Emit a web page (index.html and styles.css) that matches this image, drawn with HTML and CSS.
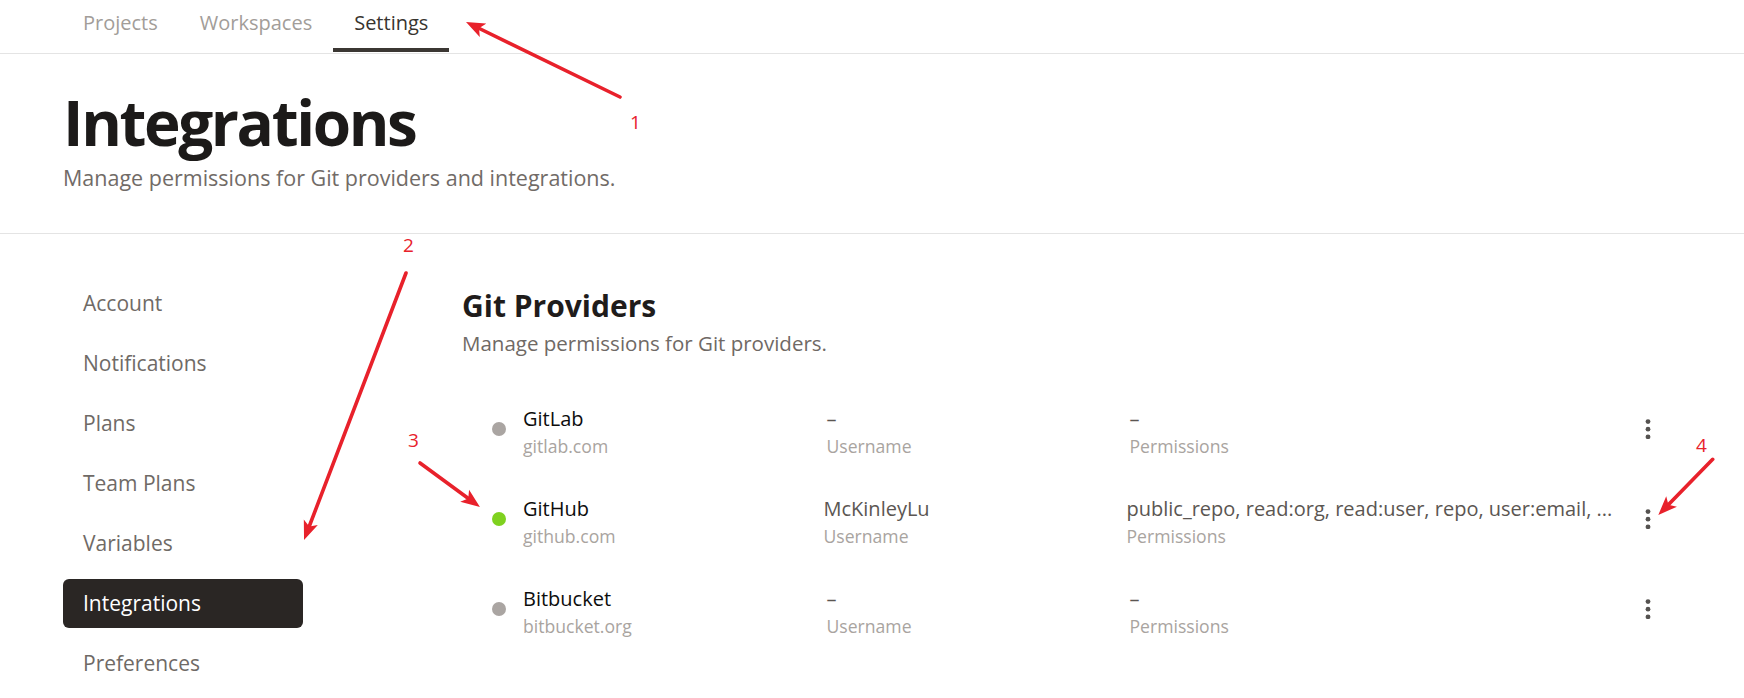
FILE: index.html
```html
<!DOCTYPE html>
<html lang="en">
<head>
<meta charset="utf-8">
<title>Integrations</title>
<link rel="stylesheet" href="styles.css">
</head>
<body>
<nav class="topnav">
  <a class="tab">Projects</a>
  <a class="tab">Workspaces</a>
  <a class="tab active">Settings</a>
</nav>
<header class="page-head">
  <h1 class="page-title">Integrations</h1>
  <p class="page-sub">Manage permissions for Git providers and integrations.</p>
</header>
<div class="layout">
  <aside class="sidebar">
    <a class="side-item">Account</a>
    <a class="side-item">Notifications</a>
    <a class="side-item">Plans</a>
    <a class="side-item">Team Plans</a>
    <a class="side-item">Variables</a>
    <a class="side-item active">Integrations</a>
    <a class="side-item">Preferences</a>
  </aside>
  <main class="main">
    <h2 class="section-title">Git Providers</h2>
    <p class="section-sub">Manage permissions for Git providers.</p>
    <div class="providers">
      <div class="row">
        <span class="dot"></span>
        <div class="cell"><div class="primary name">GitLab</div><div class="secondary">gitlab.com</div></div>
        <div class="cell"><div class="primary value">–</div><div class="secondary">Username</div></div>
        <div class="cell"><div class="primary value">–</div><div class="secondary">Permissions</div></div>
        <svg class="kebab" width="6" height="20" viewBox="0 0 6 20"><circle cx="3" cy="2.6" r="2.4"/><circle cx="3" cy="10.2" r="2.4"/><circle cx="3" cy="17.8" r="2.4"/></svg>
      </div>
      <div class="row">
        <span class="dot on"></span>
        <div class="cell"><div class="primary name">GitHub</div><div class="secondary">github.com</div></div>
        <div class="cell shift"><div class="primary value">McKinleyLu</div><div class="secondary">Username</div></div>
        <div class="cell shift"><div class="primary value">public_repo, read:org, read:user, repo, user:email, ...</div><div class="secondary">Permissions</div></div>
        <svg class="kebab" width="6" height="20" viewBox="0 0 6 20"><circle cx="3" cy="2.6" r="2.4"/><circle cx="3" cy="10.2" r="2.4"/><circle cx="3" cy="17.8" r="2.4"/></svg>
      </div>
      <div class="row">
        <span class="dot"></span>
        <div class="cell"><div class="primary name">Bitbucket</div><div class="secondary">bitbucket.org</div></div>
        <div class="cell"><div class="primary value">–</div><div class="secondary">Username</div></div>
        <div class="cell"><div class="primary value">–</div><div class="secondary">Permissions</div></div>
        <svg class="kebab" width="6" height="20" viewBox="0 0 6 20"><circle cx="3" cy="2.6" r="2.4"/><circle cx="3" cy="10.2" r="2.4"/><circle cx="3" cy="17.8" r="2.4"/></svg>
      </div>
    </div>
  </main>
</div>
<svg class="annotations" width="1744" height="698" viewBox="0 0 1744 698">
  <defs>
    <marker id="head" markerUnits="userSpaceOnUse" markerWidth="20" markerHeight="16" viewBox="0 0 20 16" refX="11" refY="8" orient="auto">
      <path d="M19,8 L0,0.5 L4.5,8 L0,15.5 Z" fill="#e8212b"/>
    </marker>
  </defs>
  <g stroke="#e8212b" stroke-width="3.6" stroke-linecap="round" fill="none" marker-end="url(#head)">
    <line x1="620" y1="97" x2="473.2" y2="25.5"/>
    <line x1="406" y1="273" x2="306.9" y2="532.5"/>
    <line x1="420" y1="463" x2="473.5" y2="502.3"/>
    <line x1="1712.7" y1="459.3" x2="1663.9" y2="509.3"/>
  </g>
  <g class="anno-num" fill="#e8212b">
    <text x="630" y="129">1</text>
    <text x="403" y="252">2</text>
    <text x="408" y="447">3</text>
    <text x="1696" y="452">4</text>
  </g>
</svg>
</body>
</html>
```
FILE: styles.css
```css
* { box-sizing: border-box; }
html, body { margin: 0; padding: 0; }
body {
  position: relative;
  width: 1744px;
  height: 698px;
  overflow: hidden;
  background: #fff;
  font-family: "Open Sans", "Noto Sans", sans-serif;
  color: #1c1a19;
}

/* top navigation */
.topnav {
  display: flex;
  height: 54px;
  padding-left: 62px;
  border-bottom: 1px solid #e4e4e4;
}
.tab {
  display: block;
  height: 52px;
  padding: 9px 21px 0;
  font-size: 20px;
  line-height: 28px;
  color: #a29d99;
  border-bottom: 4px solid transparent;
}
.tab.active {
  color: #38342f;
  border-bottom-color: #3b3733;
}

/* page header */
.page-head {
  padding: 37px 0 40.4px 63px;
  border-bottom: 1px solid #e4e4e4;
}
.page-title {
  margin: 0;
  font-size: 62px;
  line-height: 62px;
  font-weight: 700;
  letter-spacing: -2.4px;
  color: #1c1a19;
}
.page-sub {
  margin: 9.6px 0 0;
  font-size: 21.5px;
  line-height: 30px;
  color: #716b67;
}

/* body layout */
.layout {
  display: grid;
  grid-template-columns: 240px 1fr;
  column-gap: 159px;
  padding: 0 86px 0 63px;
}
.sidebar {
  display: flex;
  flex-direction: column;
  gap: 11px;
  padding-top: 45.5px;
}
.side-item {
  display: block;
  height: 49px;
  padding-left: 20px;
  font-size: 21px;
  line-height: 49px;
  color: #6f6a66;
  border-radius: 6px;
}
.side-item.active {
  background: #2a2624;
  color: #fff;
}

.main { padding-top: 54px; }
.section-title {
  margin: 0;
  font-size: 30px;
  line-height: 36px;
  font-weight: 700;
  color: #1f1c1b;
}
.section-sub {
  margin: 4.6px 0 0;
  font-size: 20.5px;
  line-height: 28px;
  color: #6f6965;
}

.providers { margin-top: 29.6px; }
.row {
  display: grid;
  grid-template-columns: 14px 286px 285.5px 1fr 20px;
  column-gap: 17.5px;
  align-items: center;
  height: 90px;
  padding-left: 29.5px;
}
.dot {
  width: 14px;
  height: 14px;
  border-radius: 50%;
  background: #aaa5a2;
  margin-bottom: 5px;
}
.dot.on { background: #7fd11f; }
.cell { white-space: nowrap; }
.cell.shift { margin-left: -3px; }
.primary {
  font-size: 20px;
  line-height: 29px;
}
.primary.name { color: #0d0d0d; }
.primary.value { color: #5b5652; }
.secondary {
  font-size: 17.6px;
  line-height: 26px;
  color: #a9a4a0;
}
.kebab {
  justify-self: center;
  margin-bottom: 5px;
  fill: #555250;
}

/* screenshot annotations */
.annotations {
  position: absolute;
  top: 0;
  left: 0;
  pointer-events: none;
}
.anno-num text {
  font-family: "Open Sans", sans-serif;
  font-size: 19px;
}
```
